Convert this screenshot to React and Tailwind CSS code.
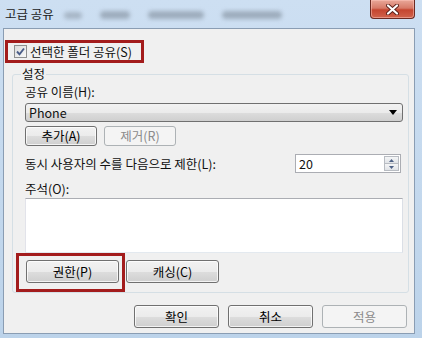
export default function App() {
  const font = "font-['Noto_Sans_CJK_KR','Noto_Sans',sans-serif]";
  const btn =
    "flex items-center justify-center rounded-[3px] border border-[#707070] bg-[linear-gradient(to_bottom,#f2f2f2_0%,#ebebeb_50%,#dddddd_51%,#cfcfcf_100%)] shadow-[inset_0_0_0_1px_rgba(255,255,255,0.75)] text-black";
  const btnDisabled =
    "flex items-center justify-center rounded-[3px] border border-[#adb2b5] bg-[#f4f4f4] text-[#8b8b8b]";

  return (
    <div
      className={`w-[422px] h-[338px] overflow-hidden bg-linear-to-b from-[#cddff2] to-[#bcd3ea] ${font} text-[12.5px] leading-[16px] text-[#111]`}
    >
      {/* Title bar */}
      <div className="h-[28px] flex items-start">
        <div className="ml-[5px] mt-[6px] leading-[16px] text-[#1a1a1a]">고급 공유</div>
        <div className="ml-[10px] mt-[11px] flex items-center gap-[18px] blur-[2px] opacity-60">
          <div className="w-[18px] h-[7px] rounded bg-[#8d9aa8]" />
          <div className="w-[30px] h-[8px] rounded bg-[#7f8c9a]" />
          <div className="w-[56px] h-[8px] rounded bg-[#7f8c9a]" />
          <div className="w-[60px] h-[8px] rounded bg-[#7f8c9a]" />
        </div>
        <div className="ml-auto mr-[7px] w-[45px] h-[19px] rounded-b-[4px] border border-t-0 border-[#6b2a22] bg-[linear-gradient(to_bottom,#e9a899_0%,#d77a68_45%,#c5452f_55%,#d0634c_100%)] shadow-[inset_0_0_0_1px_rgba(255,200,190,0.5)] flex items-center justify-center">
          <svg width="13" height="11" viewBox="0 0 13 11">
            <path d="M2 1.5 L11 9.5 M11 1.5 L2 9.5" stroke="#5a1f18" strokeWidth="4" strokeLinecap="round" />
            <path d="M2 1.5 L11 9.5 M11 1.5 L2 9.5" stroke="#ffffff" strokeWidth="2.2" strokeLinecap="round" />
          </svg>
        </div>
      </div>

      {/* Client area */}
      <div className="ml-[3px] w-[412px] h-[306px] border border-[#8a9db3] bg-[#f0f0f0] flex flex-col">
        {/* highlighted checkbox */}
        <div className="mt-[11px] ml-[1px] w-[139px] h-[23px] border-[3px] border-[#a31c1c] flex items-center pl-[6px] gap-[3px]">
          <div className="w-[13px] h-[13px] border border-[#8e8f8f] bg-linear-to-br from-[#dcdcdc] to-[#f8f8f8] flex items-center justify-center">
            <svg width="11" height="11" viewBox="0 0 11 11">
              <path d="M2 5.5 L4.5 8.3 L9 2.5" fill="none" stroke="#4a5d88" strokeWidth="1.9" />
            </svg>
          </div>
          <span className="whitespace-nowrap">선택한 폴더 공유(S)</span>
        </div>

        {/* group box */}
        <fieldset className="mt-[3px] ml-[8px] w-[397px] border border-[#d5dfe5] rounded-[3px] pl-[3px] pr-[5px] pb-0">
          <legend className="ml-[5px] px-[1px] leading-[16px]">설정</legend>
          <div className="pl-[9px] flex flex-col">
            <div className="mt-[2px] h-[16px]">공유 이름(H):</div>
            <div className="mt-[3px] w-[378px] h-[19px] rounded-[3px] border border-[#707070] bg-[linear-gradient(to_bottom,#f2f2f2_0%,#ebebeb_50%,#dddddd_51%,#cfcfcf_100%)] flex items-center pl-[3px] pr-[5px]">
              <span>Phone</span>
              <svg className="ml-auto" width="8" height="5" viewBox="0 0 8 5">
                <path d="M0 0 L8 0 L4 5 Z" fill="#000" />
              </svg>
            </div>
            <div className="mt-[4px] flex gap-[7px]">
              <div className={`${btn} w-[72px] h-[20px]`}>추가(A)</div>
              <div className={`${btnDisabled} w-[72px] h-[20px]`}>제거(R)</div>
            </div>
            <div className="mt-[8px] h-[19px] flex items-center">
              <span className="whitespace-nowrap">동시 사용자의 수를 다음으로 제한(L):</span>
              <div className="ml-auto mr-[2px] w-[106px] h-[19px] border border-[#abadb3] bg-white flex items-center pl-[3px]">
                <span>20</span>
                <div className="ml-auto mr-[1px] w-[15px] h-[15px] flex flex-col border border-[#b8bcc2]">
                  <div className="flex-1 bg-linear-to-b from-[#f5f6f7] to-[#e0e3e7] flex items-center justify-center border-b border-[#b8bcc2]">
                    <svg width="5" height="3" viewBox="0 0 5 3"><path d="M0 3 L5 3 L2.5 0 Z" fill="#4d6185" /></svg>
                  </div>
                  <div className="flex-1 bg-linear-to-b from-[#f5f6f7] to-[#e0e3e7] flex items-center justify-center">
                    <svg width="5" height="3" viewBox="0 0 5 3"><path d="M0 0 L5 0 L2.5 3 Z" fill="#4d6185" /></svg>
                  </div>
                </div>
              </div>
            </div>
            <div className="mt-[8px] h-[16px]">주석(O):</div>
            <div className="mt-[1px] w-[378px] h-[55px] border border-[#abadb3] border-l-[#e2e3ea] border-r-[#dbdfe6] border-b-[#e3e9ef] bg-white" />
          </div>
          <div className="flex items-start">
            <div className="w-[109px] h-[39px] border-[3px] border-[#a31c1c] pl-[7px] pt-[4px]">
              <div className={`${btn} w-[93px] h-[23px]`}>권한(P)</div>
            </div>
            <div className={`${btn} ml-[1px] mt-[7px] w-[93px] h-[23px]`}>캐싱(C)</div>
          </div>
        </fieldset>

        {/* bottom buttons */}
        <div className="mt-[12px] flex justify-end gap-[9px] pr-[7px]">
          <div className={`${btn} w-[85px] h-[23px] border-[#3c7fb1] shadow-[inset_0_0_0_1px_#b6dcf5]`}>확인</div>
          <div className={`${btn} w-[85px] h-[23px]`}>취소</div>
          <div className={`${btnDisabled} w-[85px] h-[23px]`}>적용</div>
        </div>
      </div>
    </div>
  );
}
